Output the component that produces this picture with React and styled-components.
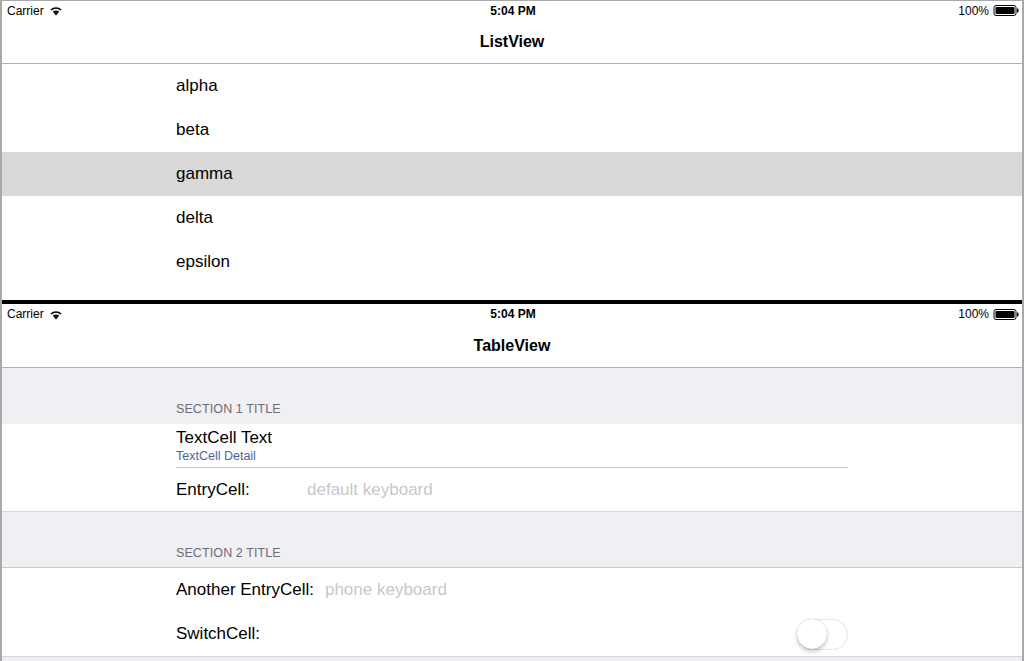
import React from "react";
import styled, { createGlobalStyle } from "styled-components";

const GlobalStyle = createGlobalStyle`
  html, body {
    margin: 0;
    padding: 0;
    background: #ffffff;
  }
  body {
    font-family: "Liberation Sans", Arial, sans-serif;
    -webkit-font-smoothing: antialiased;
  }
`;

const Screen = styled.div`
  width: 1024px;
  height: 661px;
  overflow: hidden;
  box-sizing: border-box;
  border-left: 2px solid #a9a9a9;
  border-right: 2px solid #a9a9a9;
  display: flex;
  flex-direction: column;
`;

const Pane = styled.div`
  height: ${(p) => p.$height}px;
  flex: none;
  box-sizing: border-box;
  border-top: ${(p) => (p.$top ? "1px solid #a9a9a9" : "none")};
  background: ${(p) => p.$bg || "#ffffff"};
  display: flex;
  flex-direction: column;
  overflow: hidden;
`;

const Divider = styled.div`
  height: 4px;
  flex: none;
  background: #000000;
  margin: 0 -2px;
`;

const StatusBarRow = styled.div`
  height: ${(p) => p.$height}px;
  flex: none;
  background: #ffffff;
  display: grid;
  grid-template-columns: 1fr auto 1fr;
  align-items: center;
  padding: 0 3px 0 5px;
  font-size: 12px;
  color: #000000;
`;

const StatusLeft = styled.div`
  display: flex;
  align-items: center;
  gap: 5px;
`;

const StatusTime = styled.div`
  font-weight: 700;
`;

const StatusRight = styled.div`
  display: flex;
  align-items: center;
  justify-content: flex-end;
  gap: 4px;
`;

const NavBar = styled.div`
  height: 44px;
  flex: none;
  box-sizing: border-box;
  border-bottom: 1px solid #b2b2b2;
  background: #ffffff;
  display: flex;
  align-items: center;
  justify-content: center;
  font-size: 16px;
  font-weight: 700;
  color: #000000;
`;

const ListRow = styled.div`
  height: 44px;
  flex: none;
  display: flex;
  align-items: center;
  padding-left: 174px;
  font-size: 17px;
  color: #000000;
  background: ${(p) => (p.$selected ? "#d9d9d9" : "#ffffff")};
`;

const SectionHeader = styled.div`
  height: ${(p) => p.$height}px;
  flex: none;
  box-sizing: border-box;
  display: flex;
  align-items: flex-end;
  padding: 0 0 ${(p) => p.$pad}px 174px;
  font-size: 12.5px;
  color: #6d6d72;
  text-transform: uppercase;
  letter-spacing: 0.1px;
`;

const Section = styled.div`
  flex: none;
  background: #ffffff;
  border-top: ${(p) => (p.$topLine ? "1px solid #c8c7cc" : "none")};
  border-bottom: 1px solid #d8d7dc;
  padding: 0 174px;
`;

const Cell = styled.div`
  height: ${(p) => p.$height || 44}px;
  box-sizing: border-box;
  display: flex;
  align-items: center;
  border-bottom: ${(p) => (p.$separator ? "1px solid #c8c7cc" : "none")};
`;

const TextStack = styled.div`
  display: flex;
  flex-direction: column;
  gap: 1px;
  margin-top: -1px;
`;

const CellText = styled.div`
  font-size: 17px;
  color: #000000;
`;

const CellDetail = styled.div`
  font-size: 12.5px;
  color: #4b6497;
`;

const EntryLabel = styled.div`
  font-size: 17px;
  color: #000000;
  width: ${(p) => (p.$width ? `${p.$width}px` : "auto")};
  margin-right: ${(p) => (p.$width ? 0 : 11)}px;
  flex: none;
`;

const EntryInput = styled.input`
  flex: 1;
  border: none;
  outline: none;
  background: transparent;
  padding: 0;
  font-family: inherit;
  font-size: 17px;
  color: #000000;
  &::placeholder {
    color: #c7c7cd;
  }
`;

const SwitchLabel = styled.div`
  flex: 1;
  font-size: 17px;
  color: #000000;
`;

const SwitchTrack = styled.div`
  position: relative;
  width: 51px;
  height: 31px;
  box-sizing: border-box;
  border-radius: 16px;
  border: 1.5px solid #e5e5e5;
  background: #ffffff;
`;

const SwitchKnob = styled.div`
  position: absolute;
  left: -1px;
  top: -1px;
  width: 30px;
  height: 30px;
  border-radius: 50%;
  background: #ffffff;
  box-shadow: 0 3px 4px rgba(0, 0, 0, 0.2), 0 0 1px rgba(0, 0, 0, 0.35);
`;

const Grouped = styled.div`
  flex: 1;
  background: #efeff4;
  display: flex;
  flex-direction: column;
`;

const WifiIcon = () => (
  <svg width="14" height="11" viewBox="0 0 13 10">
    <path d="M6.5 9.6 L4.4 7.3 A3 3 0 0 1 8.6 7.3 Z" fill="#000" />
    <path d="M3.4 6.2 A4.5 4.5 0 0 1 9.6 6.2 L8.7 7.2 A3.2 3.2 0 0 0 4.3 7.2 Z" fill="#000" />
    <path d="M1.3 4 A7.5 7.5 0 0 1 11.7 4 L10.7 5.1 A6 6 0 0 0 2.3 5.1 Z" fill="#000" />
  </svg>
);

const BatteryIcon = () => (
  <svg width="26" height="11" viewBox="0 0 25 11">
    <rect x="0.5" y="0.5" width="22" height="10" rx="2" fill="none" stroke="#000" />
    <rect x="2" y="2" width="19" height="7" rx="0.8" fill="#000" />
    <path d="M23.5 3.5 h0.6 a0.9 0.9 0 0 1 0.9 0.9 v2.2 a0.9 0.9 0 0 1 -0.9 0.9 h-0.6 z" fill="#000" />
  </svg>
);

const StatusBar = ({ height }) => (
  <StatusBarRow $height={height}>
    <StatusLeft>
      <span>Carrier</span>
      <WifiIcon />
    </StatusLeft>
    <StatusTime>5:04 PM</StatusTime>
    <StatusRight>
      <span>100%</span>
      <BatteryIcon />
    </StatusRight>
  </StatusBarRow>
);

const items = ["alpha", "beta", "gamma", "delta", "epsilon"];

const App = () => {
  return (
    <>
      <GlobalStyle />
      <Screen>
        <Pane $height={300} $top>
          <StatusBar height={19} />
          <NavBar>ListView</NavBar>
          {items.map((item) => (
            <ListRow key={item} $selected={item === "gamma"}>
              {item}
            </ListRow>
          ))}
        </Pane>
        <Divider />
        <Pane $height={357} $bg="#efeff4">
          <StatusBar height={20} />
          <NavBar>TableView</NavBar>
          <Grouped>
            <SectionHeader $height={56} $pad={8}>Section 1 Title</SectionHeader>
            <Section>
              <Cell $separator>
                <TextStack>
                  <CellText>TextCell Text</CellText>
                  <CellDetail>TextCell Detail</CellDetail>
                </TextStack>
              </Cell>
              <Cell $height={43}>
                <EntryLabel $width={131}>EntryCell:</EntryLabel>
                <EntryInput placeholder="default keyboard" readOnly />
              </Cell>
            </Section>
            <SectionHeader $height={55} $pad={7}>Section 2 Title</SectionHeader>
            <Section $topLine>
              <Cell>
                <EntryLabel>Another EntryCell:</EntryLabel>
                <EntryInput placeholder="phone keyboard" readOnly />
              </Cell>
              <Cell>
                <SwitchLabel>SwitchCell:</SwitchLabel>
                <SwitchTrack>
                  <SwitchKnob />
                </SwitchTrack>
              </Cell>
            </Section>
          </Grouped>
        </Pane>
      </Screen>
    </>
  );
};

export default App;
